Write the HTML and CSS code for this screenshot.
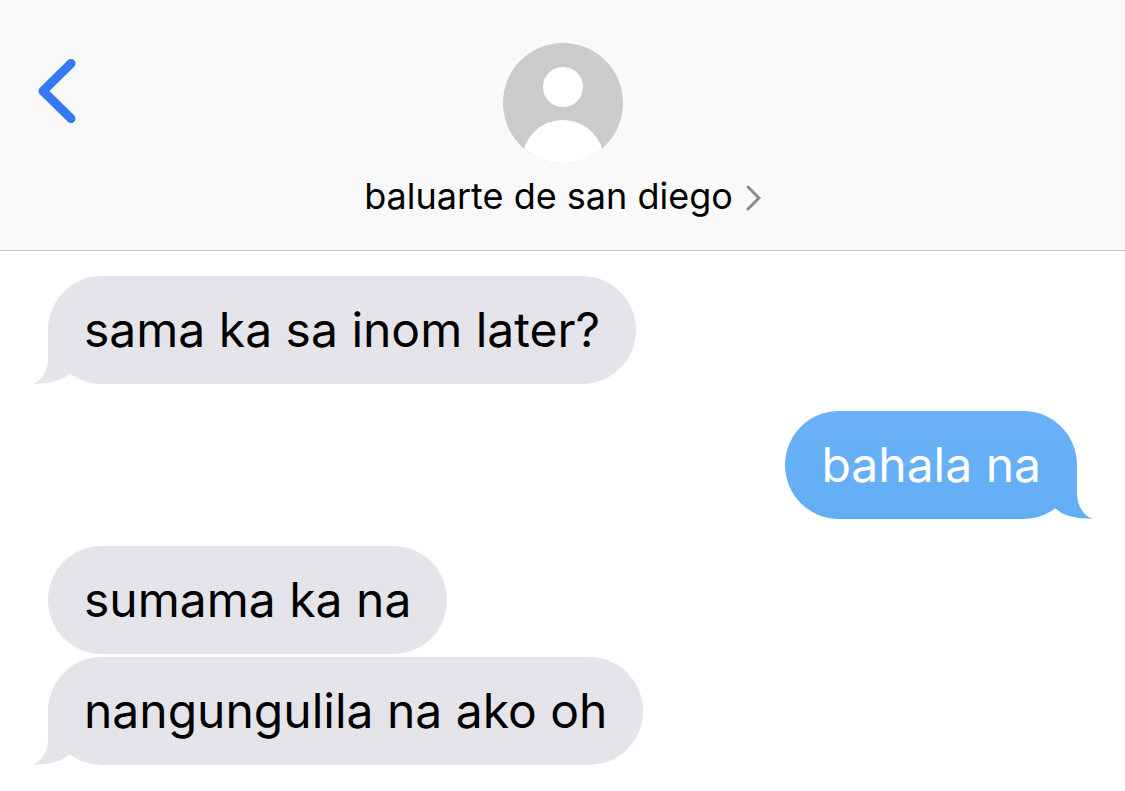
FILE: index.html
```html
<!DOCTYPE html>
<html lang="tl">
<head>
    <meta charset="UTF-8">
    <meta name="viewport" content="width=device-width, initial-scale=1.0">
    <title>baluarte de san diego</title>
    <link rel="stylesheet" href="styles.css">
</head>
<body>

<!-- Header -->
<header class="chat-header">
    <button type="button" class="back-btn" aria-label="Back">
        <svg width="40" height="66" viewBox="0 0 40 66" fill="none">
            <path d="M35 5.500 L7 33 L35 60.500" stroke="#3478f6" stroke-width="9" stroke-linecap="round" stroke-linejoin="round"/>
        </svg>
    </button>
    <a href="#" class="contact">
        <svg class="avatar" viewBox="0 0 120 120">
            <defs>
                <clipPath id="avatar-clip"><circle cx="60" cy="60" r="60"/></clipPath>
            </defs>
            <circle cx="60" cy="60" r="60" fill="#cbcbcb"/>
            <circle cx="60" cy="44" r="20" fill="#fff"/>
            <circle cx="60" cy="118" r="41" fill="#fff" clip-path="url(#avatar-clip)"/>
        </svg>
        <span class="contact-name">
            baluarte de san diego
            <svg width="16" height="26" viewBox="0 0 16 26" fill="none">
                <path d="M3 2 L14 13 L3 24" stroke="#8a8a8e" stroke-width="3" stroke-linecap="round" stroke-linejoin="miter"/>
            </svg>
        </span>
    </a>
</header>

<!-- Messages -->
<main class="messages">
    <div class="bubble received">
        sama ka sa inom later?
        <svg class="tail" viewBox="0 0 40 54"><path d="M15 0 V28 C15 40 10 49 0 54 C14 53 28 52 37 43 V0 Z"/></svg>
    </div>
    <div class="bubble sent">
        bahala na
        <svg class="tail" viewBox="0 0 40 54">
            <defs>
                <linearGradient id="sent-fill" x1="0" y1="0" x2="0" y2="1">
                    <stop offset="0" stop-color="#67b0f6"/>
                    <stop offset="1" stop-color="#62aef5"/>
                </linearGradient>
            </defs>
            <path d="M15 0 V28 C15 40 10 49 0 54 C14 53 28 52 37 43 V0 Z"/>
        </svg>
    </div>
    <div class="group">
        <div class="bubble received">sumama ka na</div>
        <div class="bubble received">
            nangungulila na ako oh
            <svg class="tail" viewBox="0 0 40 54"><path d="M15 0 V28 C15 40 10 49 0 54 C14 53 28 52 37 43 V0 Z"/></svg>
        </div>
    </div>
</main>

</body>
</html>
```

FILE: styles.css
```css
body {
    font-family: Inter, "Liberation Sans", sans-serif;
    margin: 0;
    background-color: #fff;
    color: #000;
}

.chat-header {
    display: grid;
    grid-template-columns: 120px 1fr 120px;
    align-items: start;
    padding: 43px 0 33px;
    background-color: #f9f9f9;
    border-bottom: 1px solid #c4c4c4;
}

.back-btn {
    justify-self: start;
    margin: 15px 0 0 36px;
    padding: 0;
    border: none;
    background: none;
    cursor: pointer;
}

.back-btn svg {
    display: block;
}

.contact {
    display: flex;
    flex-direction: column;
    align-items: center;
    gap: 12px;
    color: #000;
    text-decoration: none;
}

.avatar {
    width: 120px;
    height: 120px;
}

.contact-name {
    display: flex;
    align-items: center;
    gap: 12px;
    font-size: 36px;
    line-height: 42px;
}

.contact-name svg {
    margin-top: 4px;
}

.messages {
    display: flex;
    flex-direction: column;
    gap: 27px;
    padding: 25px 48px;
}

.group {
    display: flex;
    flex-direction: column;
    gap: 3px;
}

.bubble {
    position: relative;
    align-self: flex-start;
    padding: 24px 36px;
    border-radius: 54px;
    font-size: 48px;
    line-height: 60px;
}

.received {
    background-color: #e5e4eb;
}

.sent {
    align-self: flex-end;
    background: linear-gradient(#6bb1f7, #62aef5);
    color: #fff;
}

.tail {
    position: absolute;
    bottom: 0;
    left: -15px;
    width: 40px;
    height: 54px;
    fill: #e5e4eb;
}

.sent .tail {
    left: auto;
    right: -15px;
    fill: url(#sent-fill);
    transform: scaleX(-1);
}
```
